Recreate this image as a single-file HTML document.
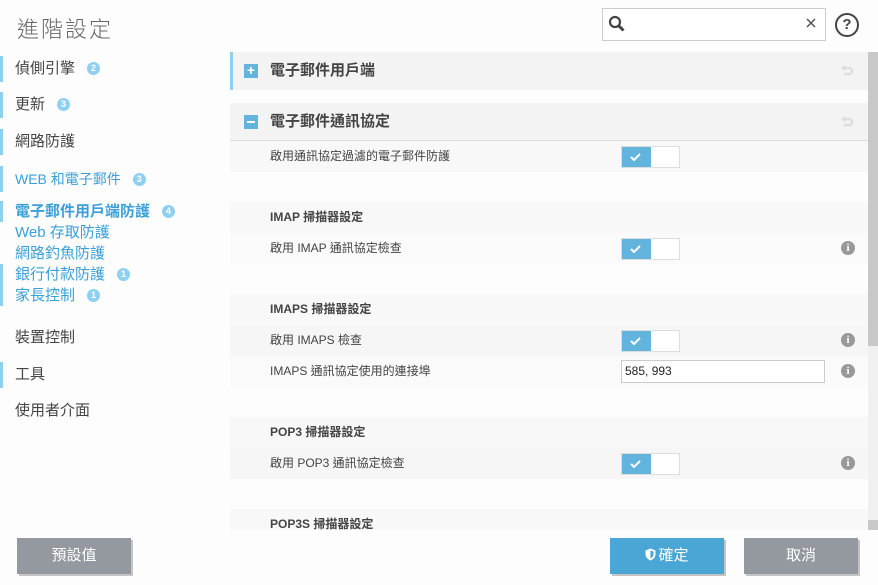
<!DOCTYPE html>
<html><head><meta charset="utf-8"><style>
*{margin:0;padding:0;box-sizing:border-box}
body{width:878px;height:585px;background:#fdfdfd;font-family:"Liberation Sans","Noto Sans CJK TC",sans-serif;position:relative;overflow:hidden;color:#444}
.abs{position:absolute}
.title{left:17px;top:12px;font-size:22px;color:#666;letter-spacing:2px;font-weight:300}
.nav{left:0;width:220px;font-size:15px;color:#444}
.nav .bar{position:absolute;left:0;width:3px;background:#8fd0f0}
.badge{display:inline-block;width:13px;height:13px;border-radius:7px;background:#8fd0f0;color:#fff;font-size:9px;font-weight:bold;text-align:center;line-height:13px;vertical-align:2px;margin-left:12px}
.blue{color:#3aa0d8}
.row{position:absolute;left:230px;width:638px;font-size:12px;color:#444}
.hdr{background:#f3f3f3;font-size:15px;font-weight:bold;color:#444}
.tg{position:absolute;left:391px;width:59px;height:22px;border:1px solid #ddd;background:#fff}
.tg i{position:absolute;left:0;top:0;width:29px;height:20px;background:#62b4dd}
.tg svg{position:absolute;left:8px;top:5px}
.info{position:absolute;left:611px;width:14px;height:14px;border-radius:7px;background:#999;color:#fff;font-size:11px;font-weight:bold;text-align:center;line-height:14px;font-family:"Liberation Serif",serif}
.btn{position:absolute;top:538px;height:36px;width:114px;color:#fff;font-size:15px;text-align:center;line-height:36px;box-shadow:2px 2px 0 #c4c4c4}
.undo{position:absolute;left:610px;top:12px}
</style></head><body>
<div class="abs title">進階設定</div>
<div class="abs" style="left:602px;top:8px;width:224px;height:33px;border:1px solid #ccc;background:#fff"></div>
<svg class="abs" style="left:607px;top:14px" width="20" height="20"><circle cx="8" cy="8" r="5" fill="none" stroke="#444" stroke-width="2.2"/><path d="M11.5 11.5l5 5" stroke="#444" stroke-width="3"/></svg>
<svg class="abs" style="left:806px;top:18px" width="10" height="10"><path d="M1 1l8 8M9 1l-8 8" stroke="#555" stroke-width="1.5"/></svg>
<div class="abs" style="left:835px;top:13px;width:24px;height:24px;border:2px solid #444;border-radius:12px;text-align:center;font-weight:bold;font-size:15px;line-height:20px;color:#444">?</div>

<div class="abs nav" style="top:56px;height:26px;line-height:26px;padding-left:15px"><span class="bar" style="top:0;height:26px"></span>偵側引擎<span class="badge">2</span></div>
<div class="abs nav" style="top:92px;height:26px;line-height:26px;padding-left:15px"><span class="bar" style="top:0;height:26px"></span>更新<span class="badge">3</span></div>
<div class="abs nav" style="top:129px;height:26px;line-height:26px;padding-left:15px"><span class="bar" style="top:0;height:26px"></span>網路防護</div>
<div class="abs nav blue" style="top:166px;height:26px;line-height:26px;padding-left:15px;font-size:14px"><span class="bar" style="top:0;height:26px"></span>WEB 和電子郵件<span class="badge">3</span></div>
<div class="abs nav blue" style="top:201px;height:21px;line-height:21px;padding-left:15px;font-weight:bold"><span class="bar" style="top:0;height:21px"></span>電子郵件用戶端防護<span class="badge">4</span></div>
<div class="abs nav blue" style="top:222px;line-height:21px;padding-left:15px">Web 存取防護</div>
<div class="abs nav blue" style="top:243px;line-height:21px;padding-left:15px">網路釣魚防護</div>
<div class="abs nav blue" style="top:264px;line-height:21px;padding-left:15px"><span class="bar" style="top:0;height:42px"></span>銀行付款防護<span class="badge">1</span></div>
<div class="abs nav blue" style="top:285px;line-height:21px;padding-left:15px">家長控制<span class="badge">1</span></div>
<div class="abs nav" style="top:325px;line-height:26px;padding-left:15px">裝置控制</div>
<div class="abs nav" style="top:362px;height:26px;line-height:26px;padding-left:15px"><span class="bar" style="top:0;height:26px"></span>工具</div>
<div class="abs nav" style="top:398px;line-height:26px;padding-left:15px">使用者介面</div>

<div class="row hdr" style="top:52px;height:38px;line-height:38px;border-left:3px solid #8fd0f0;padding-left:37px"><span class="abs" style="left:11px;top:12px;width:14px;height:14px;background:#62b4dd;color:#fff;font-size:14px;line-height:13px;text-align:center">+</span>電子郵件用戶端<svg class="undo" width="14" height="14" style="left:607px"><path d="M3 4h6a3 3 0 0 1 0 6H4" stroke="#ddd" stroke-width="2.5" fill="none"/><path d="M1 4l4-3v6z" fill="#ddd"/></svg></div>
<div class="row hdr" style="top:103px;height:38px;line-height:37px;border-bottom:1px solid #ddd;padding-left:40px"><span class="abs" style="left:14px;top:12px;width:14px;height:14px;background:#62b4dd"><i style="position:absolute;left:3px;top:6px;width:8px;height:2px;background:#fff"></i></span>電子郵件通訊協定<svg class="undo" width="14" height="14"><path d="M3 4h6a3 3 0 0 1 0 6H4" stroke="#ddd" stroke-width="2.5" fill="none"/><path d="M1 4l4-3v6z" fill="#ddd"/></svg></div>

<div class="row" style="top:141px;height:31px;line-height:31px;background:#f8f8f8;padding-left:40px">啟用通訊協定過濾的電子郵件防護<div class="tg" style="top:5px"><i></i><svg width="12" height="10"><path d="M1 5l3 3 6-6" stroke="#fff" stroke-width="2" fill="none"/></svg></div></div>
<div class="row" style="top:202px;height:31px;line-height:31px;background:#f8f8f8;padding-left:40px;font-weight:bold">IMAP 掃描器設定</div>
<div class="row" style="top:233px;height:31px;line-height:31px;background:#fafafa;padding-left:40px">啟用 IMAP 通訊協定檢查<div class="tg" style="top:5px"><i></i><svg width="12" height="10"><path d="M1 5l3 3 6-6" stroke="#fff" stroke-width="2" fill="none"/></svg></div><div class="info" style="top:8px">i</div></div>
<div class="row" style="top:294px;height:31px;line-height:31px;background:#f8f8f8;padding-left:40px;font-weight:bold">IMAPS 掃描器設定</div>
<div class="row" style="top:325px;height:31px;line-height:31px;background:#f6f6f6;padding-left:40px">啟用 IMAPS 檢查<div class="tg" style="top:5px"><i></i><svg width="12" height="10"><path d="M1 5l3 3 6-6" stroke="#fff" stroke-width="2" fill="none"/></svg></div><div class="info" style="top:8px">i</div></div>
<div class="row" style="top:356px;height:31px;line-height:31px;background:#fafafa;padding-left:40px">IMAPS 通訊協定使用的連接埠<div class="abs" style="left:391px;top:4px;width:204px;height:23px;border:1px solid #ccc;background:#fff;line-height:21px;padding-left:3px;color:#222">585, 993</div><div class="info" style="top:8px">i</div></div>
<div class="row" style="top:417px;height:31px;line-height:31px;background:#f8f8f8;padding-left:40px;font-weight:bold">POP3 掃描器設定</div>
<div class="row" style="top:448px;height:31px;line-height:31px;background:#f6f6f6;padding-left:40px">啟用 POP3 通訊協定檢查<div class="tg" style="top:5px"><i></i><svg width="12" height="10"><path d="M1 5l3 3 6-6" stroke="#fff" stroke-width="2" fill="none"/></svg></div><div class="info" style="top:8px">i</div></div>
<div class="row" style="top:509px;height:21px;line-height:31px;background:#f8f8f8;padding-left:40px;font-weight:bold;overflow:hidden">POP3S 掃描器設定</div>

<div class="abs" style="left:868px;top:52px;width:10px;height:478px;background:#f0f0f0"></div>
<div class="abs" style="left:868px;top:52px;width:10px;height:294px;background:#c8c8c8"></div>
<div class="abs" style="left:868px;top:520px;width:10px;height:10px;background:#c8c8c8"></div>

<div class="btn" style="left:17px;background:#93999f">預設值</div>
<div class="btn" style="left:610px;background:#4aa6d4"><svg width="11" height="13" style="vertical-align:-1px;margin-right:2px"><path d="M5.5 0.5L10.5 2.5V6c0 3.5-2.5 5.5-5 6.5C3 11.5 0.5 9.5 0.5 6V2.5z" fill="#fff"/><path d="M5.5 2.5V10.5C7.5 9.5 8.5 8 8.5 6V3.5z" fill="#4aa6d4"/></svg>確定</div>
<div class="btn" style="left:744px;background:#93999f">取消</div>
</body></html>
